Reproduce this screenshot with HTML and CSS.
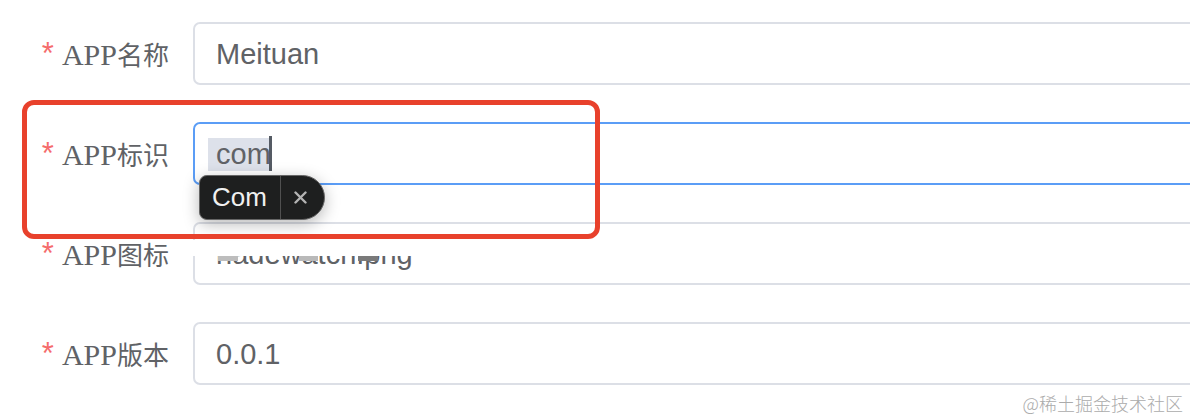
FILE: index.html
```html
<!DOCTYPE html>
<html lang="zh">
<head>
<meta charset="utf-8">
<title>APP form</title>
<link rel="stylesheet" href="styles.css">
</head>
<body>
<div class="page">
  <form class="form">
    <div class="row">
      <label class="label"><span class="req">*</span><span class="lat">APP</span>名称</label>
      <div class="input"><span class="value">Meituan</span></div>
    </div>
    <div class="row">
      <label class="label"><span class="req">*</span><span class="lat">APP</span>标识</label>
      <div class="input focused"><span class="sel">com</span><span class="caret"></span></div>
    </div>
    <div class="row">
      <label class="label"><span class="req">*</span><span class="lat">APP</span>图标</label>
      <div class="input"><span class="value">hadewatch.png</span></div>
    </div>
    <div class="row">
      <label class="label"><span class="req">*</span><span class="lat">APP</span>版本</label>
      <div class="input"><span class="value">0.0.1</span></div>
    </div>
  </form>

  <div class="glitch">
    <span class="blk b1"></span><span class="blk b2"></span><span class="blk b3"></span>
  </div>

  <div class="tip">
    <span class="tip-text">Com</span>
    <span class="tip-close">
      <svg width="13" height="13" viewBox="0 0 13 13"><path d="M1.5 1.5 L11.5 11.5 M11.5 1.5 L1.5 11.5" stroke="#b3b3b3" stroke-width="2.4" stroke-linecap="round" fill="none"/></svg>
    </span>
  </div>

  <div class="annot"></div>

  <div class="watermark">@稀土掘金技术社区</div>
</div>
</body>
</html>
```

FILE: styles.css
```css
html, body {
  margin: 0;
  padding: 0;
  background: #ffffff;
}

.page {
  position: relative;
  width: 1190px;
  height: 420px;
  overflow: hidden;
  background: #ffffff;
}

.form {
  display: flex;
  flex-direction: column;
  gap: 37px;
  padding-top: 22px;
  margin: 0;
}

.row {
  display: flex;
  align-items: center;
  height: 63px;
}

.label {
  box-sizing: border-box;
  width: 193px;
  flex: none;
  padding-right: 24px;
  display: flex;
  justify-content: flex-end;
  align-items: baseline;
  font-family: "Liberation Serif", "Noto Sans CJK SC", serif;
  font-size: 26px;
  color: #606266;
  white-space: nowrap;
}

.lat {
  font-size: 30px;
}

.req {
  font-family: "Liberation Sans", sans-serif;
  font-size: 31px;
  color: #f56c6c;
  margin-right: 8px;
  position: relative;
  top: -1px;
}

.input {
  box-sizing: border-box;
  flex: none;
  width: 1100px;
  height: 63px;
  border: 2px solid #dcdfe6;
  border-radius: 7px;
  padding: 1px 21px 0;
  display: flex;
  align-items: center;
  font-family: "Liberation Sans", "Helvetica", sans-serif;
  font-size: 29px;
  color: #606266;
  background: #fff;
}

.input.focused {
  border-color: #5b9df6;
  padding-left: 13px;
}

.sel {
  background: #dde1ea;
  line-height: 33px;
  height: 33px;
  padding: 0 0 0 8px;
}

.caret {
  display: inline-block;
  width: 3px;
  height: 35px;
  background: #555b64;
  margin-left: -2px;
  margin-top: -2px;
}

.glitch {
  position: absolute;
  left: 183px;
  top: 240px;
  width: 237px;
  height: 16px;
  background: #ffffff;
}

.blk {
  position: absolute;
  top: 16px;
  height: 5px;
}
.b1 { left: 35px; width: 20px; background: #bdbdbd; }
.b2 { left: 116px; width: 19px; background: #b9b9b9; }
.b3 { left: 175px; width: 20px; background: #7a7a7a; }

.tip {
  position: absolute;
  left: 199px;
  top: 175px;
  height: 45px;
  box-sizing: border-box;
  display: flex;
  align-items: stretch;
  background: #1e1f1f;
  border: 1.5px solid #666666;
  border-radius: 8px 23px 23px 8px;
  box-shadow: 0 4px 16px rgba(0, 0, 0, 0.28);
}

.tip-text {
  display: flex;
  align-items: center;
  padding: 0 13px 0 12px;
  font-family: "Liberation Sans", "Helvetica", sans-serif;
  font-size: 26px;
  color: #f0f0f0;
}

.tip-close {
  display: flex;
  align-items: center;
  border-left: 1px solid #505050;
  padding: 0 17px 0 13px;
}

.annot {
  position: absolute;
  left: 22px;
  top: 100px;
  width: 578px;
  height: 139px;
  box-sizing: border-box;
  border: 5px solid #e8412c;
  border-radius: 12px;
}

.watermark {
  position: absolute;
  right: 7px;
  bottom: 5px;
  font-family: "Noto Sans CJK SC", sans-serif;
  font-size: 18px;
  line-height: 24px;
  color: #ababab;
  font-weight: 300;
}
```
